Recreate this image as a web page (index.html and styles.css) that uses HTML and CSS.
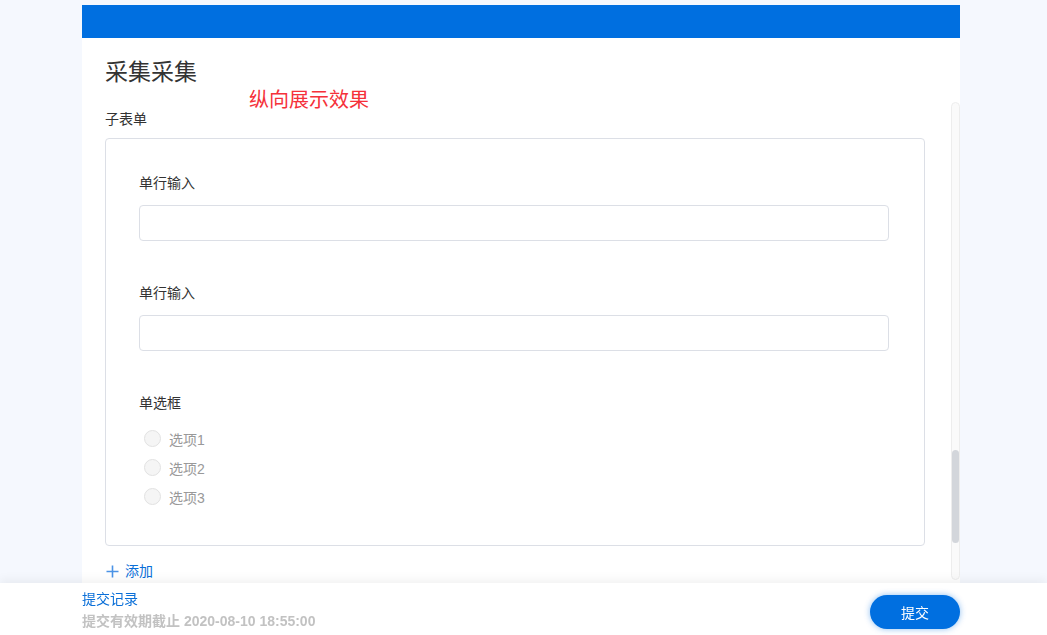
FILE: index.html
```html
<!DOCTYPE html>
<html lang="zh">
<head>
    <meta charset="UTF-8">
    <meta name="viewport" content="width=device-width, initial-scale=1.0">
    <title>采集采集</title>
    <link rel="stylesheet" href="styles.css">
</head>
<body>

    <div class="page">
        <div class="banner"></div>

        <div class="content">
            <h1 class="title">采集采集</h1>
            <span class="note">纵向展示效果</span>

            <div class="sub-label">子表单</div>

            <!-- 子表单 -->
            <div class="card">
                <div class="field">
                    <div class="field-label">单行输入</div>
                    <input type="text" class="text-input">
                </div>

                <div class="field">
                    <div class="field-label">单行输入</div>
                    <input type="text" class="text-input">
                </div>

                <div class="field">
                    <div class="field-label">单选框</div>
                    <div class="radio-group">
                        <label class="radio"><span class="dot"></span>选项1</label>
                        <label class="radio"><span class="dot"></span>选项2</label>
                        <label class="radio"><span class="dot"></span>选项3</label>
                    </div>
                </div>
            </div>

            <div class="add">
                <svg width="13" height="13" viewBox="0 0 13 13">
                    <path d="M6.5 0.5v12M0.5 6.5h12" stroke="#4b93e6" stroke-width="1.6" fill="none"/>
                </svg>
                添加
            </div>
        </div>

        <div class="scrollbar"><div class="thumb"></div></div>
    </div>

    <div class="footer">
        <div class="footer-inner">
            <div class="footer-info">
                <a class="records">提交记录</a>
                <div class="deadline">提交有效期截止 2020-08-10 18:55:00</div>
            </div>
            <button class="submit">提交</button>
        </div>
    </div>

</body>
</html>
```

FILE: styles.css
```css
/* 页面样式 */
body {
    margin: 0;
    padding-top: 5px;
    background-color: #f5f8fe;
    font-family: "Liberation Sans", "Noto Sans CJK SC", sans-serif;
    font-size: 14px;
    color: #333;
}
.page {
    position: relative;
    width: 878px;
    margin-left: 82px;
    min-height: 630px;
    background: #fff;
}
.banner {
    height: 33px;
    background-color: #006fe0;
}
.content {
    padding: 18px 35px 0 23px;
}
.title {
    margin: 0;
    font-size: 23px;
    font-weight: normal;
    line-height: 32px;
    color: #333;
}
.note {
    position: absolute;
    left: 167px;
    top: 84px;
    font-size: 20px;
    line-height: 22px;
    color: #f5313a;
}
.sub-label {
    margin-top: 21px;
    line-height: 20px;
}
.card {
    margin-top: 9px;
    padding: 34px 35px 34px 33px;
    border: 1px solid #dcdfe6;
    border-radius: 4px;
}
.field {
    margin-bottom: 42px;
}
.field:last-child {
    margin-bottom: 0;
}
.field-label {
    line-height: 20px;
}
.text-input {
    display: block;
    box-sizing: border-box;
    width: 100%;
    height: 36px;
    margin-top: 12px;
    border: 1px solid #dcdfe6;
    border-radius: 4px;
    outline: none;
}
.radio-group {
    margin-top: 11px;
}
.radio {
    display: flex;
    align-items: center;
    height: 29px;
    color: #999;
}
.dot {
    box-sizing: border-box;
    width: 17px;
    height: 17px;
    margin: 0 8px 0 5px;
    border: 1px solid #e2e2e2;
    border-radius: 50%;
    background: #f5f5f5;
}
.add {
    display: flex;
    align-items: center;
    gap: 6px;
    margin-top: 15px;
    padding-left: 1px;
    line-height: 20px;
    color: #0a6fd8;
}
.scrollbar {
    position: absolute;
    left: 869px;
    top: 97px;
    box-sizing: border-box;
    width: 9px;
    height: 478px;
    border: 1px solid #ededed;
    border-radius: 5px;
    background: #fafafa;
}
.thumb {
    margin-top: 347px;
    height: 93px;
    border-radius: 4px;
    background: #d3d6db;
}
.footer {
    position: fixed;
    left: 0;
    right: 0;
    bottom: 0;
    height: 52px;
    background: #fff;
    box-shadow: 0 -3px 10px rgba(0, 0, 0, 0.06);
}
.footer-inner {
    display: flex;
    justify-content: space-between;
    align-items: flex-start;
    width: 878px;
    margin-left: 82px;
    padding-top: 5px;
}
.records {
    display: block;
    line-height: 22px;
    color: #0a6fd8;
}
.deadline {
    line-height: 22px;
    color: #c2c2c2;
    font-weight: bold;
}
.submit {
    width: 90px;
    height: 34px;
    margin-top: 7px;
    border: none;
    border-radius: 17px;
    background-color: #006fe0;
    box-shadow: 0 0 6px rgba(0, 111, 224, 0.45);
    color: #fff;
    font-family: inherit;
    font-size: 14px;
    cursor: pointer;
}
```
